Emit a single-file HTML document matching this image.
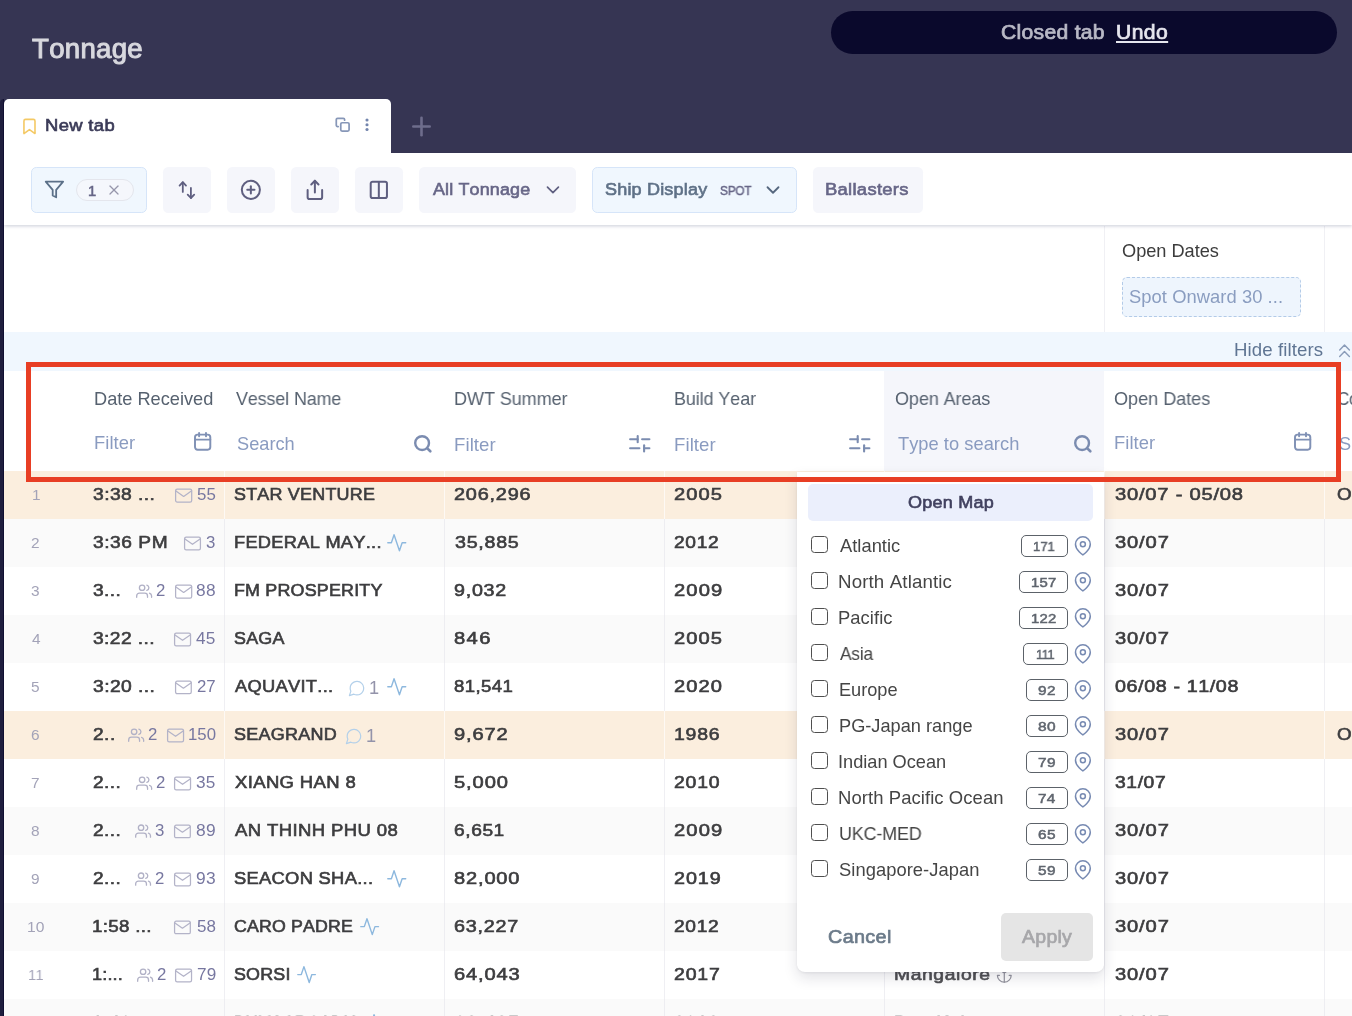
<!DOCTYPE html>
<html lang="en"><head><meta charset="utf-8"><title>Tonnage</title>
<style>
*{box-sizing:border-box;margin:0;padding:0}
html,body{width:1352px;height:1016px;overflow:hidden;background:#fff}
body{font-family:"Liberation Sans",Arial,sans-serif;font-kerning:none}
button{font:inherit;border:0;cursor:pointer}
#app{position:relative;width:1352px;height:1016px;overflow:hidden;background:#fff}
.t{position:absolute;white-space:nowrap;line-height:1;font-weight:400;display:block;transform-origin:0 0;will-change:transform}
.undo{text-decoration:underline;text-decoration-thickness:2px;text-underline-offset:2px}
.i{position:absolute;display:block;overflow:visible}
.strip{position:absolute;left:0;top:98.6px;width:4px;height:920px;background:linear-gradient(90deg,#1f1e3e 0,#1f1e3e 2.7px,#100f31 2.9px,#100f31 4px);border-radius:4px 0 0 0;z-index:4}
.topbar{position:absolute;background:#363553}
.toast{position:absolute;border-radius:22px;background:#0a092c}
.tab{position:absolute;background:#fff;border-radius:5px 5px 0 0;z-index:3}
.toolbar{position:absolute;background:#fff;box-shadow:0 1.5px 3px rgba(60,70,110,.22);z-index:2}
.btn{position:absolute;background:#f5f6fb;border-radius:5.3px}
.btn.blue{background:#f0f7fe;border:1px solid #d6e5f9}
.pill{position:absolute;border:1px solid #e4e6ed;border-radius:11px;background:#f5f7fc}
.summary{position:absolute;background:#fff}
.sumcol{position:absolute;border-left:1px solid #f0f0f4;border-right:1px solid #f0f0f4}
.chip{position:absolute;border:1px dashed #b3cbe8;border-radius:5px;background:#eef5fd}
.hidebar{position:absolute;background:#f0f7fe}
.thead{position:absolute;background:#fff}
.th{position:absolute}
.th.active{background:#f5f6fb}
.tbody{position:absolute}
.tr{position:absolute;background:#fff}
.tr.even{background:#fafafa}
.tr.peach{background:#fbeede}
.td{position:absolute;border-left:1px solid rgba(228,228,235,.6)}
.tr.peach .td{border-left-color:rgba(255,255,255,.65)}
.td.num,.td.num+.td{border-left:none}
.dropdown{position:absolute;background:#fff;border-radius:0 0 8px 8px;box-shadow:0 6px 14px rgba(30,30,60,.13),0 1px 3px rgba(30,30,60,.07);z-index:5}
.openmap{position:absolute;background:#ebeffc;border-radius:5px}
.opt{position:absolute;display:block}
.cb{position:absolute;width:17.6px;height:17.2px;border:1.3px solid #4f4f4f;border-radius:3.5px;background:#fff}
.badge{position:absolute;border:1.2px solid #5c6269;border-radius:5px;background:#fff}
.apply{position:absolute;background:#e5e5e5;border-radius:5px}
.redrect{position:absolute;left:26px;top:361.9px;width:1314.9px;height:120.2px;border:5px solid #e83e24;z-index:9;pointer-events:none}
</style></head>
<body><div id="app">
<header class="topbar" style="left:0px;top:0px;width:1352px;height:153px;">
<h1 class="t" style="left:31.79px;top:36.000px;font-size:26.78px;color:#d8d8de;-webkit-text-stroke:0.99px #d8d8de;letter-spacing:0.282px;transform:scaleX(1.0309);">Tonnage</h1>
<div class="toast" style="left:831px;top:11px;width:506px;height:43px;">
<span class="t" style="left:170.12px;top:11.000px;font-size:20.08px;color:#b9b9c6;-webkit-text-stroke:0.74px #b9b9c6;letter-spacing:0.278px;transform:scaleX(1.0516);">Closed tab</span>
<a class="t undo" style="left:284.56px;top:11.000px;font-size:20.08px;color:#e6e6ee;-webkit-text-stroke:0.74px #e6e6ee;letter-spacing:0.405px;transform:scaleX(1.0512);">Undo</a>
</div>
</header>
<div class="tab" style="left:4px;top:99px;width:387.2px;height:55px;">
<svg class="i" style="left:16.07px;top:18.17px" width="18.95" height="18.95" viewBox="0 0 24 24" fill="none" stroke="#f4c965" stroke-width="2.03" stroke-linecap="round" stroke-linejoin="round"><path d="M19 21l-7-5-7 5V5a2 2 0 0 1 2-2h10a2 2 0 0 1 2 2z"/></svg>
<span class="t" style="left:40.73px;top:18.000px;font-size:17.4px;color:#3b3b58;-webkit-text-stroke:0.64px #3b3b58;letter-spacing:0.318px;transform:scaleX(1.0604);">New tab</span>
<svg class="i" style="left:331.27px;top:18.07px" width="15.36" height="15.36" viewBox="0 0 24 24" fill="none" stroke="#8797b8" stroke-width="2.7" stroke-linecap="round" stroke-linejoin="round"><rect x="9" y="9" width="13" height="13" rx="2" ry="2"/><path d="M5 15H4a2 2 0 0 1-2-2V4a2 2 0 0 1 2-2h9a2 2 0 0 1 2 2v1"/></svg>
<svg class="i" style="left:360.90px;top:19.30px" width="4" height="14" viewBox="0 0 4 14" fill="#7385ad" stroke="none" stroke-width="0" stroke-linecap="round" stroke-linejoin="round"><circle cx="2" cy="2" r="1.55"/><circle cx="2" cy="6.75" r="1.55"/><circle cx="2" cy="11.5" r="1.55"/></svg>
</div>
<svg class="i" style="left:410.00px;top:114.60px" width="23" height="23" viewBox="0 0 23 23" fill="none" stroke="#6e6d8c" stroke-width="2.6" stroke-linecap="round" stroke-linejoin="round"><line x1="11.5" y1="2.8" x2="11.5" y2="20.2"/><line x1="3.3" y1="11.5" x2="19.7" y2="11.5"/></svg>
<div class="toolbar" style="left:4px;top:153px;width:1348px;height:72px;">
<div class="btn blue" style="left:27.2px;top:14px;width:115.7px;height:45.6px;">
<svg class="i" style="left:11.92px;top:11.42px" width="20.86" height="20.86" viewBox="0 0 24 24" fill="none" stroke="#5b7088" stroke-width="2.07" stroke-linecap="round" stroke-linejoin="round"><polygon points="22 3 2 3 10 12.46 10 19 14 21 14 12.46 22 3"/></svg>
<div class="pill" style="left:43.9px;top:11px;width:57.8px;height:22px;">
<span class="t" style="left:10.75px;top:4.000px;font-size:14.73px;color:#676687;-webkit-text-stroke:0.55px #676687;">1</span>
<svg class="i" style="left:28.85px;top:1.85px" width="16" height="16" viewBox="0 0 24 24" fill="none" stroke="#9696ab" stroke-width="1.95" stroke-linecap="round" stroke-linejoin="round"><line x1="18" y1="6" x2="6" y2="18"/><line x1="6" y1="6" x2="18" y2="18"/></svg>
</div>
</div>
<div class="btn" style="left:159.1px;top:14px;width:47.8px;height:45.6px;">
<svg class="i" style="left:13.90px;top:13.00px" width="20" height="20" viewBox="0 0 20 20" fill="none" stroke="#5f5f80" stroke-width="1.8" stroke-linecap="round" stroke-linejoin="round"><polyline points="2.6,5.6 5.8,2.2 9.0,5.6"/><line x1="5.8" y1="2.3" x2="5.8" y2="11.9"/><polyline points="10.7,14.6 13.9,18.0 17.2,14.6"/><line x1="13.9" y1="7.9" x2="13.9" y2="17.9"/></svg>
</div>
<div class="btn" style="left:223.1px;top:14px;width:47.8px;height:45.6px;">
<svg class="i" style="left:12.99px;top:11.99px" width="21.72" height="21.72" viewBox="0 0 24 24" fill="none" stroke="#5f5f80" stroke-width="2.21" stroke-linecap="round" stroke-linejoin="round"><circle cx="12" cy="12" r="10"/><line x1="12" y1="8" x2="12" y2="16"/><line x1="8" y1="12" x2="16" y2="12"/></svg>
</div>
<div class="btn" style="left:287.1px;top:14px;width:47.8px;height:45.6px;">
<svg class="i" style="left:12.91px;top:12.01px" width="21.78" height="21.78" viewBox="0 0 24 24" fill="none" stroke="#5f5f80" stroke-width="2.2" stroke-linecap="round" stroke-linejoin="round"><path d="M4 12v8a2 2 0 0 0 2 2h12a2 2 0 0 0 2-2v-8"/><polyline points="16 6 12 2 8 6"/><line x1="12" y1="2" x2="12" y2="15"/></svg>
</div>
<div class="btn" style="left:351.1px;top:14px;width:47.8px;height:45.6px;">
<svg class="i" style="left:13.12px;top:12.07px" width="21.67" height="21.67" viewBox="0 0 24 24" fill="none" stroke="#5f5f80" stroke-width="2.22" stroke-linecap="round" stroke-linejoin="round"><path d="M12 3h7a2 2 0 0 1 2 2v14a2 2 0 0 1-2 2h-7m0-18H5a2 2 0 0 0-2 2v14a2 2 0 0 0 2 2h7m0-18v18"/></svg>
</div>
<div class="btn" style="left:415px;top:14px;width:156.8px;height:45.6px;">
<span class="t" style="left:14.29px;top:14.000px;font-size:17.4px;color:#676687;-webkit-text-stroke:0.64px #676687;letter-spacing:0.146px;transform:scaleX(1.0302);">All Tonnage</span>
<svg class="i" style="left:122.80px;top:11.80px" width="21.9" height="21.9" viewBox="0 0 24 24" fill="none" stroke="#5f5f80" stroke-width="1.86" stroke-linecap="round" stroke-linejoin="round"><polyline points="6 9 12 15 18 9"/></svg>
</div>
<div class="btn blue" style="left:588.2px;top:14px;width:204.4px;height:45.6px;">
<span class="t" style="left:12.11px;top:13.000px;font-size:17.4px;color:#5f7187;-webkit-text-stroke:0.64px #5f7187;letter-spacing:0.168px;transform:scaleX(1.0369);">Ship Display</span>
<span class="t" style="left:126.39px;top:17.000px;font-size:12.05px;color:#676687;-webkit-text-stroke:0.45px #676687;letter-spacing:-0.160px;transform:scaleX(0.9733);">SPOT</span>
<svg class="i" style="left:168.80px;top:11.15px" width="22" height="22" viewBox="0 0 24 24" fill="none" stroke="#55677e" stroke-width="1.96" stroke-linecap="round" stroke-linejoin="round"><polyline points="6 9 12 15 18 9"/></svg>
</div>
<div class="btn" style="left:809.3px;top:14px;width:109.5px;height:45.6px;">
<span class="t" style="left:12.13px;top:14.000px;font-size:17.4px;color:#676687;-webkit-text-stroke:0.64px #676687;letter-spacing:0.257px;transform:scaleX(1.0608);">Ballasters</span>
</div>
</div>
<div class="summary" style="left:4px;top:226px;width:1348px;height:106px;">
<div class="sumcol" style="left:1100.3px;top:0px;width:220.5px;height:106px;">
<span class="t" style="left:16.84px;top:16.000px;font-size:18.2px;color:#3c3c3c;letter-spacing:-0.012px;transform:scaleX(0.9979);">Open Dates</span>
<div class="chip" style="left:16.7px;top:51px;width:179px;height:40px;">
<span class="t" style="left:5.57px;top:10.000px;font-size:18.2px;color:#8a9dc0;letter-spacing:0.048px;transform:scaleX(1.0102);">Spot Onward 30 ...</span>
</div>
</div>
</div>
<div class="hidebar" style="left:4px;top:332px;width:1348px;height:39px;">
<span class="t" style="left:1229.97px;top:9.000px;font-size:18.2px;color:#5f7593;letter-spacing:0.099px;transform:scaleX(1.0247);">Hide filters</span>
<svg class="i" style="left:1334.00px;top:11.00px" width="14" height="15" viewBox="0 0 14 15" fill="none" stroke="#8a9cb9" stroke-width="1.4" stroke-linecap="round" stroke-linejoin="round"><polyline points="1.7,7 6.5,1.9 11.4,7"/><polyline points="1.7,13.5 6.5,8.5 11.4,13.5"/></svg>
</div>
<div class="thead" style="left:4px;top:371px;width:1348px;height:100px;">
<div class="th" style="left:80.3px;top:0px;width:140px;height:100px;">
<span class="t lab" style="left:9.96px;top:19.000px;font-size:18.2px;color:#56616f;">Date Received</span>
<span class="t ph" style="left:9.94px;top:63.000px;font-size:18.2px;color:#8a9bc0;letter-spacing:0.042px;transform:scaleX(1.0101);">Filter</span>
<svg class="i" style="left:109.10px;top:59.50px" width="20" height="21" viewBox="0 0 20 21" fill="none" stroke="#8091b5" stroke-width="1.95" stroke-linecap="round" stroke-linejoin="round"><rect x="2" y="3.6" width="15.3" height="15.1" rx="2.6"/><line x1="6.1" y1="2" x2="6.1" y2="5.3"/><line x1="13" y1="2" x2="13" y2="5.3"/><line x1="2" y1="8.6" x2="17.3" y2="8.6"/></svg>
</div>
<div class="th" style="left:220.3px;top:0px;width:220px;height:100px;">
<span class="t lab" style="left:11.22px;top:19.000px;font-size:18.2px;color:#56616f;letter-spacing:-0.101px;transform:scaleX(0.9828);">Vessel Name</span>
<span class="t ph" style="left:12.57px;top:64.000px;font-size:18.2px;color:#8a9bc0;letter-spacing:0.010px;">Search</span>
<svg class="i" style="left:188.70px;top:63.00px" width="21" height="21" viewBox="0 0 21 21" fill="none" stroke="#7b8cb0" stroke-width="2.4" stroke-linecap="round" stroke-linejoin="round"><circle cx="9.1" cy="9.1" r="6.9"/><line x1="14.3" y1="14.4" x2="17.3" y2="17.3" stroke-width="2.7"/></svg>
</div>
<div class="th" style="left:440.3px;top:0px;width:220px;height:100px;">
<span class="t lab" style="left:9.32px;top:19.000px;font-size:18.2px;color:#56616f;letter-spacing:-0.061px;transform:scaleX(0.9910);">DWT Summer</span>
<span class="t ph" style="left:9.28px;top:65.000px;font-size:18.2px;color:#8a9bc0;letter-spacing:0.086px;transform:scaleX(1.0211);">Filter</span>
<svg class="i" style="left:183.90px;top:63.20px" width="24" height="20" viewBox="0 0 24 20" fill="none" stroke="#7b8cb0" stroke-width="2.1" stroke-linecap="round" stroke-linejoin="round"><line x1="2.1" y1="5.2" x2="9.7" y2="5.2"/><line x1="9.7" y1="2.1" x2="9.7" y2="8.3"/><line x1="14.1" y1="5.2" x2="21.4" y2="5.2"/><line x1="2.1" y1="14.2" x2="11.4" y2="14.2"/><line x1="16.1" y1="11.2" x2="16.1" y2="17.4"/><line x1="16.1" y1="14.2" x2="21.4" y2="14.2"/></svg>
</div>
<div class="th" style="left:660.3px;top:0px;width:220px;height:100px;">
<span class="t lab" style="left:9.53px;top:19.000px;font-size:18.2px;color:#56616f;letter-spacing:-0.074px;transform:scaleX(0.9852);">Build Year</span>
<span class="t ph" style="left:9.48px;top:65.000px;font-size:18.2px;color:#8a9bc0;letter-spacing:0.086px;transform:scaleX(1.0211);">Filter</span>
<svg class="i" style="left:183.90px;top:63.20px" width="24" height="20" viewBox="0 0 24 20" fill="none" stroke="#7b8cb0" stroke-width="2.1" stroke-linecap="round" stroke-linejoin="round"><line x1="2.1" y1="5.2" x2="9.7" y2="5.2"/><line x1="9.7" y1="2.1" x2="9.7" y2="8.3"/><line x1="14.1" y1="5.2" x2="21.4" y2="5.2"/><line x1="2.1" y1="14.2" x2="11.4" y2="14.2"/><line x1="16.1" y1="11.2" x2="16.1" y2="17.4"/><line x1="16.1" y1="14.2" x2="21.4" y2="14.2"/></svg>
</div>
<div class="th active" style="left:880.3px;top:0px;width:220px;height:100px;">
<span class="t lab" style="left:10.35px;top:19.000px;font-size:18.2px;color:#56616f;letter-spacing:-0.067px;transform:scaleX(0.9884);">Open Areas</span>
<span class="t ph" style="left:13.49px;top:64.000px;font-size:18.2px;color:#8a9bc0;letter-spacing:0.027px;transform:scaleX(1.0055);">Type to search</span>
<svg class="i" style="left:188.90px;top:63.00px" width="21" height="21" viewBox="0 0 21 21" fill="none" stroke="#7b8cb0" stroke-width="2.4" stroke-linecap="round" stroke-linejoin="round"><circle cx="9.1" cy="9.1" r="6.9"/><line x1="14.3" y1="14.4" x2="17.3" y2="17.3" stroke-width="2.7"/></svg>
</div>
<div class="th" style="left:1100.3px;top:0px;width:220px;height:100px;">
<span class="t lab" style="left:10.04px;top:19.000px;font-size:18.2px;color:#56616f;letter-spacing:-0.031px;transform:scaleX(0.9945);">Open Dates</span>
<span class="t ph" style="left:9.39px;top:63.000px;font-size:18.2px;color:#8a9bc0;letter-spacing:0.045px;transform:scaleX(1.0110);">Filter</span>
<svg class="i" style="left:188.90px;top:59.50px" width="20" height="21" viewBox="0 0 20 21" fill="none" stroke="#8091b5" stroke-width="1.95" stroke-linecap="round" stroke-linejoin="round"><rect x="2" y="3.6" width="15.3" height="15.1" rx="2.6"/><line x1="6.1" y1="2" x2="6.1" y2="5.3"/><line x1="13" y1="2" x2="13" y2="5.3"/><line x1="2" y1="8.6" x2="17.3" y2="8.6"/></svg>
</div>
<div class="th" style="left:1320.3px;top:0px;width:220px;height:100px;">
<span class="t lab" style="left:12.83px;top:19.000px;font-size:18.2px;color:#56616f;letter-spacing:-0.490px;transform:scaleX(0.9400);">Comments</span>
<span class="t ph" style="left:14.27px;top:64.000px;font-size:18.2px;color:#8a9bc0;">Search</span>
</div>
</div>
<div class="tbody" style="left:4px;top:471px;width:1348px;height:545px;">
<div class="tr peach" style="left:0px;top:0px;width:1348px;height:48px;">
<div class="td num" style="left:0px;top:0px;width:80.3px;height:48px;">
<span class="t" style="left:27.73px;top:16.000px;font-size:15.4px;color:#a3a3b8;">1</span>
</div>
<div class="td" style="left:80.3px;top:0px;width:140px;height:48px;">
<span class="t" style="left:8.52px;top:15.000px;font-size:17.4px;color:#3d3d3f;-webkit-text-stroke:0.64px #3d3d3f;letter-spacing:0.382px;transform:scaleX(1.1066);">3:38 ...</span>
<svg class="i" style="left:89.54px;top:14.94px" width="19.31" height="19.31" viewBox="0 0 24 24" fill="none" stroke="#b3b3c8" stroke-width="1.55" stroke-linecap="round" stroke-linejoin="round"><path d="M4 4h16c1.1 0 2 .9 2 2v12c0 1.1-.9 2-2 2H4c-1.1 0-2-.9-2-2V6c0-1.1.9-2 2-2z"/><polyline points="22,6 12,13 2,6"/></svg>
<span class="t" style="left:112.67px;top:16.000px;font-size:16.8px;color:#7777a0;letter-spacing:0.049px;transform:scaleX(1.0053);">55</span>
</div>
<div class="td" style="left:220.3px;top:0px;width:220px;height:48px;">
<span class="t" style="left:9.11px;top:15.000px;font-size:17.4px;color:#3d3d3f;-webkit-text-stroke:0.64px #3d3d3f;letter-spacing:0.201px;transform:scaleX(1.0317);">STAR VENTURE</span>
</div>
<div class="td" style="left:440.3px;top:0px;width:220px;height:48px;">
<span class="t" style="left:8.97px;top:15.000px;font-size:17.4px;color:#3d3d3f;-webkit-text-stroke:0.64px #3d3d3f;letter-spacing:0.690px;transform:scaleX(1.1418);">206,296</span>
</div>
<div class="td" style="left:660.3px;top:0px;width:220px;height:48px;">
<span class="t" style="left:9.06px;top:15.000px;font-size:17.4px;color:#3d3d3f;-webkit-text-stroke:0.64px #3d3d3f;letter-spacing:0.914px;transform:scaleX(1.1560);">2005</span>
</div>
<div class="td" style="left:880.3px;top:0px;width:220px;height:48px;">
<span class="t" style="left:8.50px;top:15.000px;font-size:17.4px;color:#4f4f52;-webkit-text-stroke:0.64px #4f4f52;letter-spacing:0.500px;transform:scaleX(1.0800);">Paradip</span>
</div>
<div class="td" style="left:1100.3px;top:0px;width:220px;height:48px;">
<span class="t" style="left:9.30px;top:15.000px;font-size:17.4px;color:#3d3d3f;-webkit-text-stroke:0.64px #3d3d3f;letter-spacing:0.657px;transform:scaleX(1.1600);">30/07 - 05/08</span>
</div>
<div class="td" style="left:1320.3px;top:0px;width:220px;height:48px;">
<span class="t" style="left:12.06px;top:15.000px;font-size:17.4px;color:#3d3d3f;-webkit-text-stroke:0.64px #3d3d3f;letter-spacing:0.500px;transform:scaleX(1.0800);">Open</span>
</div>
</div>
<div class="tr even" style="left:0px;top:48px;width:1348px;height:48px;">
<div class="td num" style="left:0px;top:0px;width:80.3px;height:48px;">
<span class="t" style="left:27.23px;top:16.000px;font-size:15.4px;color:#a3a3b8;">2</span>
</div>
<div class="td" style="left:80.3px;top:0px;width:140px;height:48px;">
<span class="t" style="left:8.52px;top:15.000px;font-size:17.4px;color:#3d3d3f;-webkit-text-stroke:0.64px #3d3d3f;letter-spacing:0.515px;transform:scaleX(1.0995);">3:36 PM</span>
<svg class="i" style="left:98.69px;top:15.09px" width="19.01" height="19.01" viewBox="0 0 24 24" fill="none" stroke="#b3b3c8" stroke-width="1.58" stroke-linecap="round" stroke-linejoin="round"><path d="M4 4h16c1.1 0 2 .9 2 2v12c0 1.1-.9 2-2 2H4c-1.1 0-2-.9-2-2V6c0-1.1.9-2 2-2z"/><polyline points="22,6 12,13 2,6"/></svg>
<span class="t" style="left:121.81px;top:16.000px;font-size:16.8px;color:#7777a0;">3</span>
</div>
<div class="td" style="left:220.3px;top:0px;width:220px;height:48px;">
<span class="t" style="left:8.44px;top:15.000px;font-size:17.4px;color:#3d3d3f;-webkit-text-stroke:0.64px #3d3d3f;letter-spacing:0.261px;transform:scaleX(1.0490);">FEDERAL MAY...</span>
<svg class="i" style="left:161.04px;top:12.99px" width="21.52" height="21.52" viewBox="0 0 24 24" fill="none" stroke="#8db8de" stroke-width="1.56" stroke-linecap="round" stroke-linejoin="round"><polyline points="22 12 18 12 15 21 9 3 6 12 2 12"/></svg>
</div>
<div class="td" style="left:440.3px;top:0px;width:220px;height:48px;">
<span class="t" style="left:9.21px;top:15.000px;font-size:17.4px;color:#3d3d3f;-webkit-text-stroke:0.64px #3d3d3f;letter-spacing:0.647px;transform:scaleX(1.1293);">35,885</span>
</div>
<div class="td" style="left:660.3px;top:0px;width:220px;height:48px;">
<span class="t" style="left:9.09px;top:15.000px;font-size:17.4px;color:#3d3d3f;-webkit-text-stroke:0.64px #3d3d3f;letter-spacing:0.625px;transform:scaleX(1.1020);">2012</span>
</div>
<div class="td" style="left:880.3px;top:0px;width:220px;height:48px;">
<span class="t" style="left:8.50px;top:15.000px;font-size:17.4px;color:#4f4f52;-webkit-text-stroke:0.64px #4f4f52;letter-spacing:0.500px;transform:scaleX(1.0800);">Houston</span>
</div>
<div class="td" style="left:1100.3px;top:0px;width:220px;height:48px;">
<span class="t" style="left:9.30px;top:15.000px;font-size:17.4px;color:#3d3d3f;-webkit-text-stroke:0.64px #3d3d3f;letter-spacing:0.769px;transform:scaleX(1.1548);">30/07</span>
</div>
<div class="td" style="left:1320.3px;top:0px;width:220px;height:48px;">
</div>
</div>
<div class="tr" style="left:0px;top:96px;width:1348px;height:48px;">
<div class="td num" style="left:0px;top:0px;width:80.3px;height:48px;">
<span class="t" style="left:27.41px;top:16.000px;font-size:15.4px;color:#a3a3b8;">3</span>
</div>
<div class="td" style="left:80.3px;top:0px;width:140px;height:48px;">
<span class="t" style="left:8.52px;top:15.000px;font-size:17.4px;color:#3d3d3f;-webkit-text-stroke:0.64px #3d3d3f;letter-spacing:0.369px;transform:scaleX(1.1003);">3...</span>
<svg class="i" style="left:51.56px;top:16.31px" width="16.28" height="16.28" viewBox="0 0 24 24" fill="none" stroke="#b1b1c6" stroke-width="1.92" stroke-linecap="round" stroke-linejoin="round"><path d="M17 21v-2a4 4 0 0 0-4-4H5a4 4 0 0 0-4 4v2"/><circle cx="9" cy="7" r="4"/><path d="M23 21v-2a4 4 0 0 0-3-3.87"/><path d="M16 3.13a4 4 0 0 1 0 7.75"/></svg>
<span class="t" style="left:71.86px;top:16.000px;font-size:16.8px;color:#7777a0;">2</span>
<svg class="i" style="left:89.54px;top:14.94px" width="19.31" height="19.31" viewBox="0 0 24 24" fill="none" stroke="#b3b3c8" stroke-width="1.55" stroke-linecap="round" stroke-linejoin="round"><path d="M4 4h16c1.1 0 2 .9 2 2v12c0 1.1-.9 2-2 2H4c-1.1 0-2-.9-2-2V6c0-1.1.9-2 2-2z"/><polyline points="22,6 12,13 2,6"/></svg>
<span class="t" style="left:111.95px;top:16.000px;font-size:16.8px;color:#7777a0;letter-spacing:0.263px;transform:scaleX(1.0292);">88</span>
</div>
<div class="td" style="left:220.3px;top:0px;width:220px;height:48px;">
<span class="t" style="left:8.46px;top:15.000px;font-size:17.4px;color:#3d3d3f;-webkit-text-stroke:0.64px #3d3d3f;letter-spacing:0.180px;transform:scaleX(1.0293);">FM PROSPERITY</span>
</div>
<div class="td" style="left:440.3px;top:0px;width:220px;height:48px;">
<span class="t" style="left:9.04px;top:15.000px;font-size:17.4px;color:#3d3d3f;-webkit-text-stroke:0.64px #3d3d3f;letter-spacing:0.666px;transform:scaleX(1.1317);">9,032</span>
</div>
<div class="td" style="left:660.3px;top:0px;width:220px;height:48px;">
<span class="t" style="left:9.06px;top:15.000px;font-size:17.4px;color:#3d3d3f;-webkit-text-stroke:0.64px #3d3d3f;letter-spacing:0.956px;transform:scaleX(1.1600);">2009</span>
</div>
<div class="td" style="left:880.3px;top:0px;width:220px;height:48px;">
<span class="t" style="left:9.09px;top:15.000px;font-size:17.4px;color:#4f4f52;-webkit-text-stroke:0.64px #4f4f52;letter-spacing:0.500px;transform:scaleX(1.0800);">Chittagong</span>
</div>
<div class="td" style="left:1100.3px;top:0px;width:220px;height:48px;">
<span class="t" style="left:9.30px;top:15.000px;font-size:17.4px;color:#3d3d3f;-webkit-text-stroke:0.64px #3d3d3f;letter-spacing:0.769px;transform:scaleX(1.1548);">30/07</span>
</div>
<div class="td" style="left:1320.3px;top:0px;width:220px;height:48px;">
</div>
</div>
<div class="tr even" style="left:0px;top:144px;width:1348px;height:48px;">
<div class="td num" style="left:0px;top:0px;width:80.3px;height:48px;">
<span class="t" style="left:27.65px;top:16.000px;font-size:15.4px;color:#a3a3b8;">4</span>
</div>
<div class="td" style="left:80.3px;top:0px;width:140px;height:48px;">
<span class="t" style="left:8.52px;top:15.000px;font-size:17.4px;color:#3d3d3f;-webkit-text-stroke:0.64px #3d3d3f;letter-spacing:0.372px;transform:scaleX(1.1034);">3:22 ...</span>
<svg class="i" style="left:88.58px;top:15.03px" width="19.13" height="19.13" viewBox="0 0 24 24" fill="none" stroke="#b3b3c8" stroke-width="1.57" stroke-linecap="round" stroke-linejoin="round"><path d="M4 4h16c1.1 0 2 .9 2 2v12c0 1.1-.9 2-2 2H4c-1.1 0-2-.9-2-2V6c0-1.1.9-2 2-2z"/><polyline points="22,6 12,13 2,6"/></svg>
<span class="t" style="left:112.20px;top:16.000px;font-size:16.8px;color:#7777a0;letter-spacing:0.240px;transform:scaleX(1.0260);">45</span>
</div>
<div class="td" style="left:220.3px;top:0px;width:220px;height:48px;">
<span class="t" style="left:9.12px;top:15.000px;font-size:17.4px;color:#3d3d3f;-webkit-text-stroke:0.64px #3d3d3f;letter-spacing:0.242px;transform:scaleX(1.0288);">SAGA</span>
</div>
<div class="td" style="left:440.3px;top:0px;width:220px;height:48px;">
<span class="t" style="left:9.09px;top:15.000px;font-size:17.4px;color:#3d3d3f;-webkit-text-stroke:0.64px #3d3d3f;letter-spacing:1.183px;transform:scaleX(1.1600);">846</span>
</div>
<div class="td" style="left:660.3px;top:0px;width:220px;height:48px;">
<span class="t" style="left:9.06px;top:15.000px;font-size:17.4px;color:#3d3d3f;-webkit-text-stroke:0.64px #3d3d3f;letter-spacing:0.914px;transform:scaleX(1.1560);">2005</span>
</div>
<div class="td" style="left:880.3px;top:0px;width:220px;height:48px;">
<span class="t" style="left:8.50px;top:15.000px;font-size:17.4px;color:#4f4f52;-webkit-text-stroke:0.64px #4f4f52;letter-spacing:0.500px;transform:scaleX(1.0800);">Rotterdam</span>
</div>
<div class="td" style="left:1100.3px;top:0px;width:220px;height:48px;">
<span class="t" style="left:9.30px;top:15.000px;font-size:17.4px;color:#3d3d3f;-webkit-text-stroke:0.64px #3d3d3f;letter-spacing:0.769px;transform:scaleX(1.1548);">30/07</span>
</div>
<div class="td" style="left:1320.3px;top:0px;width:220px;height:48px;">
</div>
</div>
<div class="tr" style="left:0px;top:192px;width:1348px;height:48px;">
<div class="td num" style="left:0px;top:0px;width:80.3px;height:48px;">
<span class="t" style="left:27.38px;top:16.000px;font-size:15.4px;color:#a3a3b8;">5</span>
</div>
<div class="td" style="left:80.3px;top:0px;width:140px;height:48px;">
<span class="t" style="left:8.52px;top:15.000px;font-size:17.4px;color:#3d3d3f;-webkit-text-stroke:0.64px #3d3d3f;letter-spacing:0.384px;transform:scaleX(1.1072);">3:20 ...</span>
<svg class="i" style="left:90.18px;top:15.18px" width="18.83" height="18.83" viewBox="0 0 24 24" fill="none" stroke="#b3b3c8" stroke-width="1.59" stroke-linecap="round" stroke-linejoin="round"><path d="M4 4h16c1.1 0 2 .9 2 2v12c0 1.1-.9 2-2 2H4c-1.1 0-2-.9-2-2V6c0-1.1.9-2 2-2z"/><polyline points="22,6 12,13 2,6"/></svg>
<span class="t" style="left:113.06px;top:16.000px;font-size:16.8px;color:#7777a0;letter-spacing:-0.069px;transform:scaleX(0.9925);">27</span>
</div>
<div class="td" style="left:220.3px;top:0px;width:220px;height:48px;">
<span class="t" style="left:9.90px;top:15.000px;font-size:17.4px;color:#3d3d3f;-webkit-text-stroke:0.64px #3d3d3f;letter-spacing:0.266px;transform:scaleX(1.0521);">AQUAVIT...</span>
<svg class="i" style="left:121.67px;top:15.67px" width="19.07" height="19.07" viewBox="0 0 24 24" fill="none" stroke="#b3d0ea" stroke-width="1.51" stroke-linecap="round" stroke-linejoin="round"><path d="M21 11.5a8.38 8.38 0 0 1-.9 3.8 8.5 8.5 0 0 1-7.6 4.7 8.38 8.38 0 0 1-3.8-.9L3 21l1.9-5.7a8.38 8.38 0 0 1-.9-3.8 8.5 8.5 0 0 1 4.7-7.6 8.38 8.38 0 0 1 3.8-.9h.5a8.48 8.48 0 0 1 8 8v.5z"/></svg>
<span class="t" style="left:143.61px;top:16.000px;font-size:18.2px;color:#9393aa;">1</span>
<svg class="i" style="left:161.04px;top:12.99px" width="21.52" height="21.52" viewBox="0 0 24 24" fill="none" stroke="#8db8de" stroke-width="1.56" stroke-linecap="round" stroke-linejoin="round"><polyline points="22 12 18 12 15 21 9 3 6 12 2 12"/></svg>
</div>
<div class="td" style="left:440.3px;top:0px;width:220px;height:48px;">
<span class="t" style="left:9.13px;top:15.000px;font-size:17.4px;color:#3d3d3f;-webkit-text-stroke:0.64px #3d3d3f;letter-spacing:0.363px;transform:scaleX(1.0690);">81,541</span>
</div>
<div class="td" style="left:660.3px;top:0px;width:220px;height:48px;">
<span class="t" style="left:9.06px;top:15.000px;font-size:17.4px;color:#3d3d3f;-webkit-text-stroke:0.64px #3d3d3f;letter-spacing:0.910px;transform:scaleX(1.1549);">2020</span>
</div>
<div class="td" style="left:880.3px;top:0px;width:220px;height:48px;">
<span class="t" style="left:9.19px;top:15.000px;font-size:17.4px;color:#4f4f52;-webkit-text-stroke:0.64px #4f4f52;letter-spacing:0.500px;transform:scaleX(1.0800);">Singapore</span>
</div>
<div class="td" style="left:1100.3px;top:0px;width:220px;height:48px;">
<span class="t" style="left:9.29px;top:15.000px;font-size:17.4px;color:#3d3d3f;-webkit-text-stroke:0.64px #3d3d3f;letter-spacing:0.534px;transform:scaleX(1.1325);">06/08 - 11/08</span>
</div>
<div class="td" style="left:1320.3px;top:0px;width:220px;height:48px;">
</div>
</div>
<div class="tr peach" style="left:0px;top:240px;width:1348px;height:48px;">
<div class="td num" style="left:0px;top:0px;width:80.3px;height:48px;">
<span class="t" style="left:27.22px;top:16.000px;font-size:15.4px;color:#a3a3b8;">6</span>
</div>
<div class="td" style="left:80.3px;top:0px;width:140px;height:48px;">
<span class="t" style="left:8.29px;top:15.000px;font-size:17.4px;color:#3d3d3f;-webkit-text-stroke:0.64px #3d3d3f;letter-spacing:0.426px;transform:scaleX(1.0994);">2..</span>
<svg class="i" style="left:43.53px;top:16.28px" width="16.33" height="16.33" viewBox="0 0 24 24" fill="none" stroke="#b1b1c6" stroke-width="1.91" stroke-linecap="round" stroke-linejoin="round"><path d="M17 21v-2a4 4 0 0 0-4-4H5a4 4 0 0 0-4 4v2"/><circle cx="9" cy="7" r="4"/><path d="M23 21v-2a4 4 0 0 0-3-3.87"/><path d="M16 3.13a4 4 0 0 1 0 7.75"/></svg>
<span class="t" style="left:64.06px;top:16.000px;font-size:16.8px;color:#7777a0;">2</span>
<svg class="i" style="left:81.48px;top:15.03px" width="19.13" height="19.13" viewBox="0 0 24 24" fill="none" stroke="#b3b3c8" stroke-width="1.57" stroke-linecap="round" stroke-linejoin="round"><path d="M4 4h16c1.1 0 2 .9 2 2v12c0 1.1-.9 2-2 2H4c-1.1 0-2-.9-2-2V6c0-1.1.9-2 2-2z"/><polyline points="22,6 12,13 2,6"/></svg>
<span class="t" style="left:103.32px;top:16.000px;font-size:16.8px;color:#7777a0;">150</span>
</div>
<div class="td" style="left:220.3px;top:0px;width:220px;height:48px;">
<span class="t" style="left:9.11px;top:15.000px;font-size:17.4px;color:#3d3d3f;-webkit-text-stroke:0.64px #3d3d3f;letter-spacing:0.243px;transform:scaleX(1.0338);">SEAGRAND</span>
<svg class="i" style="left:118.87px;top:15.67px" width="19.07" height="19.07" viewBox="0 0 24 24" fill="none" stroke="#b3d0ea" stroke-width="1.51" stroke-linecap="round" stroke-linejoin="round"><path d="M21 11.5a8.38 8.38 0 0 1-.9 3.8 8.5 8.5 0 0 1-7.6 4.7 8.38 8.38 0 0 1-3.8-.9L3 21l1.9-5.7a8.38 8.38 0 0 1-.9-3.8 8.5 8.5 0 0 1 4.7-7.6 8.38 8.38 0 0 1 3.8-.9h.5a8.48 8.48 0 0 1 8 8v.5z"/></svg>
<span class="t" style="left:140.81px;top:16.000px;font-size:18.2px;color:#9393aa;">1</span>
</div>
<div class="td" style="left:440.3px;top:0px;width:220px;height:48px;">
<span class="t" style="left:9.03px;top:15.000px;font-size:17.4px;color:#3d3d3f;-webkit-text-stroke:0.64px #3d3d3f;letter-spacing:0.766px;transform:scaleX(1.1546);">9,672</span>
</div>
<div class="td" style="left:660.3px;top:0px;width:220px;height:48px;">
<span class="t" style="left:8.58px;top:15.000px;font-size:17.4px;color:#3d3d3f;-webkit-text-stroke:0.64px #3d3d3f;letter-spacing:0.704px;transform:scaleX(1.1176);">1986</span>
</div>
<div class="td" style="left:880.3px;top:0px;width:220px;height:48px;">
<span class="t" style="left:10.01px;top:15.000px;font-size:17.4px;color:#4f4f52;-webkit-text-stroke:0.64px #4f4f52;letter-spacing:0.500px;transform:scaleX(1.0800);">Alexandria</span>
</div>
<div class="td" style="left:1100.3px;top:0px;width:220px;height:48px;">
<span class="t" style="left:9.30px;top:15.000px;font-size:17.4px;color:#3d3d3f;-webkit-text-stroke:0.64px #3d3d3f;letter-spacing:0.769px;transform:scaleX(1.1548);">30/07</span>
</div>
<div class="td" style="left:1320.3px;top:0px;width:220px;height:48px;">
<span class="t" style="left:12.06px;top:15.000px;font-size:17.4px;color:#3d3d3f;-webkit-text-stroke:0.64px #3d3d3f;letter-spacing:0.500px;transform:scaleX(1.0800);">Open</span>
</div>
</div>
<div class="tr" style="left:0px;top:288px;width:1348px;height:48px;">
<div class="td num" style="left:0px;top:0px;width:80.3px;height:48px;">
<span class="t" style="left:27.21px;top:16.000px;font-size:15.4px;color:#a3a3b8;">7</span>
</div>
<div class="td" style="left:80.3px;top:0px;width:140px;height:48px;">
<span class="t" style="left:8.29px;top:15.000px;font-size:17.4px;color:#3d3d3f;-webkit-text-stroke:0.64px #3d3d3f;letter-spacing:0.356px;transform:scaleX(1.0972);">2...</span>
<svg class="i" style="left:51.43px;top:16.28px" width="16.33" height="16.33" viewBox="0 0 24 24" fill="none" stroke="#b1b1c6" stroke-width="1.91" stroke-linecap="round" stroke-linejoin="round"><path d="M17 21v-2a4 4 0 0 0-4-4H5a4 4 0 0 0-4 4v2"/><circle cx="9" cy="7" r="4"/><path d="M23 21v-2a4 4 0 0 0-3-3.87"/><path d="M16 3.13a4 4 0 0 1 0 7.75"/></svg>
<span class="t" style="left:71.76px;top:16.000px;font-size:16.8px;color:#7777a0;">2</span>
<svg class="i" style="left:88.58px;top:15.03px" width="19.13" height="19.13" viewBox="0 0 24 24" fill="none" stroke="#b3b3c8" stroke-width="1.57" stroke-linecap="round" stroke-linejoin="round"><path d="M4 4h16c1.1 0 2 .9 2 2v12c0 1.1-.9 2-2 2H4c-1.1 0-2-.9-2-2V6c0-1.1.9-2 2-2z"/><polyline points="22,6 12,13 2,6"/></svg>
<span class="t" style="left:112.04px;top:16.000px;font-size:16.8px;color:#7777a0;letter-spacing:0.225px;transform:scaleX(1.0247);">35</span>
</div>
<div class="td" style="left:220.3px;top:0px;width:220px;height:48px;">
<span class="t" style="left:9.52px;top:15.000px;font-size:17.4px;color:#3d3d3f;-webkit-text-stroke:0.64px #3d3d3f;letter-spacing:0.348px;transform:scaleX(1.0627);">XIANG HAN 8</span>
</div>
<div class="td" style="left:440.3px;top:0px;width:220px;height:48px;">
<span class="t" style="left:9.16px;top:15.000px;font-size:17.4px;color:#3d3d3f;-webkit-text-stroke:0.64px #3d3d3f;letter-spacing:0.779px;transform:scaleX(1.1563);">5,000</span>
</div>
<div class="td" style="left:660.3px;top:0px;width:220px;height:48px;">
<span class="t" style="left:9.08px;top:15.000px;font-size:17.4px;color:#3d3d3f;-webkit-text-stroke:0.64px #3d3d3f;letter-spacing:0.702px;transform:scaleX(1.1153);">2010</span>
</div>
<div class="td" style="left:880.3px;top:0px;width:220px;height:48px;">
<span class="t" style="left:9.16px;top:15.000px;font-size:17.4px;color:#4f4f52;-webkit-text-stroke:0.64px #4f4f52;letter-spacing:0.500px;transform:scaleX(1.0800);">Qingdao</span>
</div>
<div class="td" style="left:1100.3px;top:0px;width:220px;height:48px;">
<span class="t" style="left:9.32px;top:15.000px;font-size:17.4px;color:#3d3d3f;-webkit-text-stroke:0.64px #3d3d3f;letter-spacing:0.557px;transform:scaleX(1.1075);">31/07</span>
</div>
<div class="td" style="left:1320.3px;top:0px;width:220px;height:48px;">
</div>
</div>
<div class="tr even" style="left:0px;top:336px;width:1348px;height:48px;">
<div class="td num" style="left:0px;top:0px;width:80.3px;height:48px;">
<span class="t" style="left:27.33px;top:16.000px;font-size:15.4px;color:#a3a3b8;">8</span>
</div>
<div class="td" style="left:80.3px;top:0px;width:140px;height:48px;">
<span class="t" style="left:8.29px;top:15.000px;font-size:17.4px;color:#3d3d3f;-webkit-text-stroke:0.64px #3d3d3f;letter-spacing:0.356px;transform:scaleX(1.0972);">2...</span>
<svg class="i" style="left:50.57px;top:16.37px" width="16.17" height="16.17" viewBox="0 0 24 24" fill="none" stroke="#b1b1c6" stroke-width="1.93" stroke-linecap="round" stroke-linejoin="round"><path d="M17 21v-2a4 4 0 0 0-4-4H5a4 4 0 0 0-4 4v2"/><circle cx="9" cy="7" r="4"/><path d="M23 21v-2a4 4 0 0 0-3-3.87"/><path d="M16 3.13a4 4 0 0 1 0 7.75"/></svg>
<span class="t" style="left:71.06px;top:16.000px;font-size:16.8px;color:#7777a0;">3</span>
<svg class="i" style="left:89.10px;top:15.15px" width="18.89" height="18.89" viewBox="0 0 24 24" fill="none" stroke="#b3b3c8" stroke-width="1.59" stroke-linecap="round" stroke-linejoin="round"><path d="M4 4h16c1.1 0 2 .9 2 2v12c0 1.1-.9 2-2 2H4c-1.1 0-2-.9-2-2V6c0-1.1.9-2 2-2z"/><polyline points="22,6 12,13 2,6"/></svg>
<span class="t" style="left:111.84px;top:16.000px;font-size:16.8px;color:#7777a0;letter-spacing:0.317px;transform:scaleX(1.0356);">89</span>
</div>
<div class="td" style="left:220.3px;top:0px;width:220px;height:48px;">
<span class="t" style="left:9.90px;top:15.000px;font-size:17.4px;color:#3d3d3f;-webkit-text-stroke:0.64px #3d3d3f;letter-spacing:0.350px;transform:scaleX(1.0656);">AN THINH PHU 08</span>
</div>
<div class="td" style="left:440.3px;top:0px;width:220px;height:48px;">
<span class="t" style="left:8.98px;top:15.000px;font-size:17.4px;color:#3d3d3f;-webkit-text-stroke:0.64px #3d3d3f;letter-spacing:0.528px;transform:scaleX(1.1018);">6,651</span>
</div>
<div class="td" style="left:660.3px;top:0px;width:220px;height:48px;">
<span class="t" style="left:9.06px;top:15.000px;font-size:17.4px;color:#3d3d3f;-webkit-text-stroke:0.64px #3d3d3f;letter-spacing:0.956px;transform:scaleX(1.1600);">2009</span>
</div>
<div class="td" style="left:880.3px;top:0px;width:220px;height:48px;">
<span class="t" style="left:8.50px;top:15.000px;font-size:17.4px;color:#4f4f52;-webkit-text-stroke:0.64px #4f4f52;letter-spacing:0.500px;transform:scaleX(1.0800);">Haiphong</span>
</div>
<div class="td" style="left:1100.3px;top:0px;width:220px;height:48px;">
<span class="t" style="left:9.30px;top:15.000px;font-size:17.4px;color:#3d3d3f;-webkit-text-stroke:0.64px #3d3d3f;letter-spacing:0.769px;transform:scaleX(1.1548);">30/07</span>
</div>
<div class="td" style="left:1320.3px;top:0px;width:220px;height:48px;">
</div>
</div>
<div class="tr" style="left:0px;top:384px;width:1348px;height:48px;">
<div class="td num" style="left:0px;top:0px;width:80.3px;height:48px;">
<span class="t" style="left:27.28px;top:16.000px;font-size:15.4px;color:#a3a3b8;">9</span>
</div>
<div class="td" style="left:80.3px;top:0px;width:140px;height:48px;">
<span class="t" style="left:8.29px;top:15.000px;font-size:17.4px;color:#3d3d3f;-webkit-text-stroke:0.64px #3d3d3f;letter-spacing:0.356px;transform:scaleX(1.0972);">2...</span>
<svg class="i" style="left:50.57px;top:16.37px" width="16.17" height="16.17" viewBox="0 0 24 24" fill="none" stroke="#b1b1c6" stroke-width="1.93" stroke-linecap="round" stroke-linejoin="round"><path d="M17 21v-2a4 4 0 0 0-4-4H5a4 4 0 0 0-4 4v2"/><circle cx="9" cy="7" r="4"/><path d="M23 21v-2a4 4 0 0 0-3-3.87"/><path d="M16 3.13a4 4 0 0 1 0 7.75"/></svg>
<span class="t" style="left:71.16px;top:16.000px;font-size:16.8px;color:#7777a0;">2</span>
<svg class="i" style="left:88.86px;top:15.06px" width="19.07" height="19.07" viewBox="0 0 24 24" fill="none" stroke="#b3b3c8" stroke-width="1.57" stroke-linecap="round" stroke-linejoin="round"><path d="M4 4h16c1.1 0 2 .9 2 2v12c0 1.1-.9 2-2 2H4c-1.1 0-2-.9-2-2V6c0-1.1.9-2 2-2z"/><polyline points="22,6 12,13 2,6"/></svg>
<span class="t" style="left:111.78px;top:16.000px;font-size:16.8px;color:#7777a0;letter-spacing:0.317px;transform:scaleX(1.0356);">93</span>
</div>
<div class="td" style="left:220.3px;top:0px;width:220px;height:48px;">
<span class="t" style="left:9.10px;top:15.000px;font-size:17.4px;color:#3d3d3f;-webkit-text-stroke:0.64px #3d3d3f;letter-spacing:0.289px;transform:scaleX(1.0535);">SEACON SHA...</span>
<svg class="i" style="left:161.04px;top:12.99px" width="21.52" height="21.52" viewBox="0 0 24 24" fill="none" stroke="#8db8de" stroke-width="1.56" stroke-linecap="round" stroke-linejoin="round"><polyline points="22 12 18 12 15 21 9 3 6 12 2 12"/></svg>
</div>
<div class="td" style="left:440.3px;top:0px;width:220px;height:48px;">
<span class="t" style="left:9.10px;top:15.000px;font-size:17.4px;color:#3d3d3f;-webkit-text-stroke:0.64px #3d3d3f;letter-spacing:0.741px;transform:scaleX(1.1510);">82,000</span>
</div>
<div class="td" style="left:660.3px;top:0px;width:220px;height:48px;">
<span class="t" style="left:9.07px;top:15.000px;font-size:17.4px;color:#3d3d3f;-webkit-text-stroke:0.64px #3d3d3f;letter-spacing:0.807px;transform:scaleX(1.1355);">2019</span>
</div>
<div class="td" style="left:880.3px;top:0px;width:220px;height:48px;">
<span class="t" style="left:9.45px;top:15.000px;font-size:17.4px;color:#4f4f52;-webkit-text-stroke:0.64px #4f4f52;letter-spacing:0.500px;transform:scaleX(1.0800);">Zhoushan</span>
</div>
<div class="td" style="left:1100.3px;top:0px;width:220px;height:48px;">
<span class="t" style="left:9.30px;top:15.000px;font-size:17.4px;color:#3d3d3f;-webkit-text-stroke:0.64px #3d3d3f;letter-spacing:0.769px;transform:scaleX(1.1548);">30/07</span>
</div>
<div class="td" style="left:1320.3px;top:0px;width:220px;height:48px;">
</div>
</div>
<div class="tr even" style="left:0px;top:432px;width:1348px;height:48px;">
<div class="td num" style="left:0px;top:0px;width:80.3px;height:48px;">
<span class="t" style="left:23.11px;top:16.000px;font-size:15.4px;color:#a3a3b8;letter-spacing:0.119px;transform:scaleX(1.0146);">10</span>
</div>
<div class="td" style="left:80.3px;top:0px;width:140px;height:48px;">
<span class="t" style="left:7.82px;top:15.000px;font-size:17.4px;color:#3d3d3f;-webkit-text-stroke:0.64px #3d3d3f;letter-spacing:0.286px;transform:scaleX(1.0788);">1:58 ...</span>
<svg class="i" style="left:89.10px;top:15.15px" width="18.89" height="18.89" viewBox="0 0 24 24" fill="none" stroke="#b3b3c8" stroke-width="1.59" stroke-linecap="round" stroke-linejoin="round"><path d="M4 4h16c1.1 0 2 .9 2 2v12c0 1.1-.9 2-2 2H4c-1.1 0-2-.9-2-2V6c0-1.1.9-2 2-2z"/><polyline points="22,6 12,13 2,6"/></svg>
<span class="t" style="left:112.42px;top:16.000px;font-size:16.8px;color:#7777a0;letter-spacing:0.109px;transform:scaleX(1.0119);">58</span>
</div>
<div class="td" style="left:220.3px;top:0px;width:220px;height:48px;">
<span class="t" style="left:9.02px;top:15.000px;font-size:17.4px;color:#3d3d3f;-webkit-text-stroke:0.64px #3d3d3f;letter-spacing:0.146px;transform:scaleX(1.0219);">CARO PADRE</span>
<svg class="i" style="left:133.66px;top:13.11px" width="21.28" height="21.28" viewBox="0 0 24 24" fill="none" stroke="#8db8de" stroke-width="1.58" stroke-linecap="round" stroke-linejoin="round"><polyline points="22 12 18 12 15 21 9 3 6 12 2 12"/></svg>
</div>
<div class="td" style="left:440.3px;top:0px;width:220px;height:48px;">
<span class="t" style="left:8.96px;top:15.000px;font-size:17.4px;color:#3d3d3f;-webkit-text-stroke:0.64px #3d3d3f;letter-spacing:0.677px;transform:scaleX(1.1372);">63,227</span>
</div>
<div class="td" style="left:660.3px;top:0px;width:220px;height:48px;">
<span class="t" style="left:9.09px;top:15.000px;font-size:17.4px;color:#3d3d3f;-webkit-text-stroke:0.64px #3d3d3f;letter-spacing:0.625px;transform:scaleX(1.1020);">2012</span>
</div>
<div class="td" style="left:880.3px;top:0px;width:220px;height:48px;">
<span class="t" style="left:8.50px;top:15.000px;font-size:17.4px;color:#4f4f52;-webkit-text-stroke:0.64px #4f4f52;letter-spacing:0.500px;transform:scaleX(1.0800);">Kandla</span>
</div>
<div class="td" style="left:1100.3px;top:0px;width:220px;height:48px;">
<span class="t" style="left:9.30px;top:15.000px;font-size:17.4px;color:#3d3d3f;-webkit-text-stroke:0.64px #3d3d3f;letter-spacing:0.769px;transform:scaleX(1.1548);">30/07</span>
</div>
<div class="td" style="left:1320.3px;top:0px;width:220px;height:48px;">
</div>
</div>
<div class="tr" style="left:0px;top:480px;width:1348px;height:48px;">
<div class="td num" style="left:0px;top:0px;width:80.3px;height:48px;">
<span class="t" style="left:23.90px;top:16.000px;font-size:15.4px;color:#a3a3b8;letter-spacing:-0.630px;transform:scaleX(0.9400);">11</span>
</div>
<div class="td" style="left:80.3px;top:0px;width:140px;height:48px;">
<span class="t" style="left:7.85px;top:15.000px;font-size:17.4px;color:#3d3d3f;-webkit-text-stroke:0.64px #3d3d3f;letter-spacing:0.140px;transform:scaleX(1.0404);">1:...</span>
<svg class="i" style="left:52.31px;top:16.31px" width="16.28" height="16.28" viewBox="0 0 24 24" fill="none" stroke="#b1b1c6" stroke-width="1.92" stroke-linecap="round" stroke-linejoin="round"><path d="M17 21v-2a4 4 0 0 0-4-4H5a4 4 0 0 0-4 4v2"/><circle cx="9" cy="7" r="4"/><path d="M23 21v-2a4 4 0 0 0-3-3.87"/><path d="M16 3.13a4 4 0 0 1 0 7.75"/></svg>
<span class="t" style="left:72.56px;top:16.000px;font-size:16.8px;color:#7777a0;">2</span>
<svg class="i" style="left:89.48px;top:15.03px" width="19.13" height="19.13" viewBox="0 0 24 24" fill="none" stroke="#b3b3c8" stroke-width="1.57" stroke-linecap="round" stroke-linejoin="round"><path d="M4 4h16c1.1 0 2 .9 2 2v12c0 1.1-.9 2-2 2H4c-1.1 0-2-.9-2-2V6c0-1.1.9-2 2-2z"/><polyline points="22,6 12,13 2,6"/></svg>
<span class="t" style="left:112.22px;top:16.000px;font-size:16.8px;color:#7777a0;letter-spacing:0.195px;transform:scaleX(1.0218);">79</span>
</div>
<div class="td" style="left:220.3px;top:0px;width:220px;height:48px;">
<span class="t" style="left:9.12px;top:15.000px;font-size:17.4px;color:#3d3d3f;-webkit-text-stroke:0.64px #3d3d3f;letter-spacing:0.188px;transform:scaleX(1.0274);">SORSI</span>
<svg class="i" style="left:70.82px;top:13.17px" width="21.16" height="21.16" viewBox="0 0 24 24" fill="none" stroke="#8db8de" stroke-width="1.59" stroke-linecap="round" stroke-linejoin="round"><polyline points="22 12 18 12 15 21 9 3 6 12 2 12"/></svg>
</div>
<div class="td" style="left:440.3px;top:0px;width:220px;height:48px;">
<span class="t" style="left:8.95px;top:15.000px;font-size:17.4px;color:#3d3d3f;-webkit-text-stroke:0.64px #3d3d3f;letter-spacing:0.751px;transform:scaleX(1.1542);">64,043</span>
</div>
<div class="td" style="left:660.3px;top:0px;width:220px;height:48px;">
<span class="t" style="left:9.08px;top:15.000px;font-size:17.4px;color:#3d3d3f;-webkit-text-stroke:0.64px #3d3d3f;letter-spacing:0.719px;transform:scaleX(1.1193);">2017</span>
</div>
<div class="td" style="left:880.3px;top:0px;width:220px;height:48px;">
<span class="t" style="left:8.47px;top:15.000px;font-size:17.4px;color:#4f4f52;-webkit-text-stroke:0.64px #4f4f52;letter-spacing:0.538px;transform:scaleX(1.1100);">Mangalore</span>
<svg class="i" style="left:111.10px;top:16.30px" width="16.6" height="16.6" viewBox="0 0 24 24" fill="none" stroke="#93939d" stroke-width="1.75" stroke-linecap="round" stroke-linejoin="round"><circle cx="12" cy="5" r="3"/><line x1="12" y1="22" x2="12" y2="8"/><path d="M5 12H2a10 10 0 0 0 20 0h-3"/></svg>
</div>
<div class="td" style="left:1100.3px;top:0px;width:220px;height:48px;">
<span class="t" style="left:9.30px;top:15.000px;font-size:17.4px;color:#3d3d3f;-webkit-text-stroke:0.64px #3d3d3f;letter-spacing:0.769px;transform:scaleX(1.1548);">30/07</span>
</div>
<div class="td" style="left:1320.3px;top:0px;width:220px;height:48px;">
</div>
</div>
<div class="tr even" style="left:0px;top:528px;width:1348px;height:48px;">
<div class="td num" style="left:0px;top:0px;width:80.3px;height:48px;">
<span class="t" style="left:23.10px;top:16.000px;font-size:15.4px;color:#a3a3b8;letter-spacing:0.177px;transform:scaleX(1.0222);">12</span>
</div>
<div class="td" style="left:80.3px;top:0px;width:140px;height:48px;">
<span class="t" style="left:7.79px;top:15.000px;font-size:17.4px;color:#3d3d3f;-webkit-text-stroke:0.64px #3d3d3f;letter-spacing:0.378px;transform:scaleX(1.1068);">1:46 ...</span>
<svg class="i" style="left:89.10px;top:15.15px" width="18.89" height="18.89" viewBox="0 0 24 24" fill="none" stroke="#b3b3c8" stroke-width="1.59" stroke-linecap="round" stroke-linejoin="round"><path d="M4 4h16c1.1 0 2 .9 2 2v12c0 1.1-.9 2-2 2H4c-1.1 0-2-.9-2-2V6c0-1.1.9-2 2-2z"/><polyline points="22,6 12,13 2,6"/></svg>
<span class="t" style="left:112.23px;top:16.000px;font-size:16.8px;color:#7777a0;letter-spacing:0.201px;transform:scaleX(1.0224);">61</span>
</div>
<div class="td" style="left:220.3px;top:0px;width:220px;height:48px;">
<span class="t" style="left:8.51px;top:15.000px;font-size:17.4px;color:#3d3d3f;-webkit-text-stroke:0.64px #3d3d3f;letter-spacing:-0.071px;transform:scaleX(0.9886);">BULK ARCADIA</span>
<svg class="i" style="left:140.94px;top:12.99px" width="21.52" height="21.52" viewBox="0 0 24 24" fill="none" stroke="#8db8de" stroke-width="1.56" stroke-linecap="round" stroke-linejoin="round"><polyline points="22 12 18 12 15 21 9 3 6 12 2 12"/></svg>
</div>
<div class="td" style="left:440.3px;top:0px;width:220px;height:48px;">
<span class="t" style="left:8.95px;top:15.000px;font-size:17.4px;color:#3d3d3f;-webkit-text-stroke:0.64px #3d3d3f;letter-spacing:0.723px;transform:scaleX(1.1475);">62,435</span>
</div>
<div class="td" style="left:660.3px;top:0px;width:220px;height:48px;">
<span class="t" style="left:9.09px;top:15.000px;font-size:17.4px;color:#3d3d3f;-webkit-text-stroke:0.64px #3d3d3f;letter-spacing:0.625px;transform:scaleX(1.1020);">2012</span>
</div>
<div class="td" style="left:880.3px;top:0px;width:220px;height:48px;">
<span class="t" style="left:8.50px;top:15.000px;font-size:17.4px;color:#4f4f52;-webkit-text-stroke:0.64px #4f4f52;letter-spacing:0.500px;transform:scaleX(1.0800);">Port Kelang</span>
</div>
<div class="td" style="left:1100.3px;top:0px;width:220px;height:48px;">
<span class="t" style="left:9.30px;top:15.000px;font-size:17.4px;color:#3d3d3f;-webkit-text-stroke:0.64px #3d3d3f;letter-spacing:0.769px;transform:scaleX(1.1548);">30/07</span>
</div>
<div class="td" style="left:1320.3px;top:0px;width:220px;height:48px;">
</div>
</div>
</div>
<div class="dropdown" style="left:797.1px;top:472px;width:307.3px;height:499.6px;">
<button class="openmap" style="left:10.8px;top:12px;width:285.2px;height:37px;">
<span class="t" style="left:100.08px;top:10.000px;font-size:17.4px;color:#41415f;-webkit-text-stroke:0.64px #41415f;letter-spacing:0.216px;transform:scaleX(1.0361);">Open Map</span>
</button>
<label class="opt" style="left:0px;top:55px;width:307px;height:36px;">
<span class="cb" style="left:13.6px;top:9.2px"></span>
<span class="t" style="left:42.86px;top:10.000px;font-size:18.2px;color:#454545;letter-spacing:0.026px;transform:scaleX(1.0058);">Atlantic</span>
<span class="badge" style="left:223.9px;top:8px;width:47px;height:22px;">
<span class="t" style="left:11.25px;top:4.000px;font-size:13.38px;color:#5f656e;-webkit-text-stroke:0.5px #5f656e;letter-spacing:-0.042px;transform:scaleX(0.9778);">171</span>
</span>
<svg class="i" style="left:276.11px;top:8.96px" width="19.78" height="19.78" viewBox="0 0 24 24" fill="none" stroke="#778ab2" stroke-width="1.82" stroke-linecap="round" stroke-linejoin="round"><path d="M21 10c0 7-9 13-9 13s-9-6-9-13a9 9 0 0 1 18 0z"/><circle cx="12" cy="10" r="3"/></svg>
</label>
<label class="opt" style="left:0px;top:91px;width:307px;height:36px;">
<span class="cb" style="left:13.6px;top:9.2px"></span>
<span class="t" style="left:41.36px;top:10.000px;font-size:18.2px;color:#454545;letter-spacing:0.124px;transform:scaleX(1.0287);">North Atlantic</span>
<span class="badge" style="left:221.9px;top:8px;width:49px;height:22px;">
<span class="t" style="left:10.64px;top:4.000px;font-size:13.38px;color:#5f656e;-webkit-text-stroke:0.5px #5f656e;letter-spacing:0.193px;transform:scaleX(1.1154);">157</span>
</span>
<svg class="i" style="left:276.11px;top:8.96px" width="19.78" height="19.78" viewBox="0 0 24 24" fill="none" stroke="#778ab2" stroke-width="1.82" stroke-linecap="round" stroke-linejoin="round"><path d="M21 10c0 7-9 13-9 13s-9-6-9-13a9 9 0 0 1 18 0z"/><circle cx="12" cy="10" r="3"/></svg>
</label>
<label class="opt" style="left:0px;top:127px;width:307px;height:36px;">
<span class="cb" style="left:13.6px;top:9.2px"></span>
<span class="t" style="left:41.39px;top:10.000px;font-size:18.2px;color:#454545;letter-spacing:0.050px;transform:scaleX(1.0109);">Pacific</span>
<span class="badge" style="left:221.9px;top:8px;width:49px;height:22px;">
<span class="t" style="left:10.64px;top:4.000px;font-size:13.38px;color:#5f656e;-webkit-text-stroke:0.5px #5f656e;letter-spacing:0.193px;transform:scaleX(1.1154);">122</span>
</span>
<svg class="i" style="left:276.11px;top:8.96px" width="19.78" height="19.78" viewBox="0 0 24 24" fill="none" stroke="#778ab2" stroke-width="1.82" stroke-linecap="round" stroke-linejoin="round"><path d="M21 10c0 7-9 13-9 13s-9-6-9-13a9 9 0 0 1 18 0z"/><circle cx="12" cy="10" r="3"/></svg>
</label>
<label class="opt" style="left:0px;top:163px;width:307px;height:36px;">
<span class="cb" style="left:13.6px;top:9.2px"></span>
<span class="t" style="left:42.87px;top:10.000px;font-size:18.2px;color:#454545;letter-spacing:-0.289px;transform:scaleX(0.9565);">Asia</span>
<span class="badge" style="left:225.9px;top:8px;width:45px;height:22px;">
<span class="t" style="left:11.78px;top:4.000px;font-size:13.38px;color:#5f656e;-webkit-text-stroke:0.5px #5f656e;letter-spacing:-1.267px;transform:scaleX(0.9400);">111</span>
</span>
<svg class="i" style="left:276.11px;top:8.96px" width="19.78" height="19.78" viewBox="0 0 24 24" fill="none" stroke="#778ab2" stroke-width="1.82" stroke-linecap="round" stroke-linejoin="round"><path d="M21 10c0 7-9 13-9 13s-9-6-9-13a9 9 0 0 1 18 0z"/><circle cx="12" cy="10" r="3"/></svg>
</label>
<label class="opt" style="left:0px;top:199px;width:307px;height:36px;">
<span class="cb" style="left:13.6px;top:9.2px"></span>
<span class="t" style="left:41.41px;top:10.000px;font-size:18.2px;color:#454545;letter-spacing:-0.027px;transform:scaleX(0.9955);">Europe</span>
<span class="badge" style="left:228.8px;top:8px;width:42.1px;height:22px;">
<span class="t" style="left:11.37px;top:4.000px;font-size:13.38px;color:#5f656e;-webkit-text-stroke:0.5px #5f656e;letter-spacing:0.316px;transform:scaleX(1.1459);">92</span>
</span>
<svg class="i" style="left:276.11px;top:8.96px" width="19.78" height="19.78" viewBox="0 0 24 24" fill="none" stroke="#778ab2" stroke-width="1.82" stroke-linecap="round" stroke-linejoin="round"><path d="M21 10c0 7-9 13-9 13s-9-6-9-13a9 9 0 0 1 18 0z"/><circle cx="12" cy="10" r="3"/></svg>
</label>
<label class="opt" style="left:0px;top:235px;width:307px;height:36px;">
<span class="cb" style="left:13.6px;top:9.2px"></span>
<span class="t" style="left:41.41px;top:10.000px;font-size:18.2px;color:#454545;letter-spacing:0.007px;">PG-Japan range</span>
<span class="badge" style="left:228.8px;top:8px;width:42.1px;height:22px;">
<span class="t" style="left:11.22px;top:4.000px;font-size:13.38px;color:#5f656e;-webkit-text-stroke:0.5px #5f656e;letter-spacing:0.340px;transform:scaleX(1.1561);">80</span>
</span>
<svg class="i" style="left:276.11px;top:8.96px" width="19.78" height="19.78" viewBox="0 0 24 24" fill="none" stroke="#778ab2" stroke-width="1.82" stroke-linecap="round" stroke-linejoin="round"><path d="M21 10c0 7-9 13-9 13s-9-6-9-13a9 9 0 0 1 18 0z"/><circle cx="12" cy="10" r="3"/></svg>
</label>
<label class="opt" style="left:0px;top:271px;width:307px;height:36px;">
<span class="cb" style="left:13.6px;top:9.2px"></span>
<span class="t" style="left:41.22px;top:10.000px;font-size:18.2px;color:#454545;">Indian Ocean</span>
<span class="badge" style="left:228.8px;top:8px;width:42.1px;height:22px;">
<span class="t" style="left:11.30px;top:4.000px;font-size:13.38px;color:#5f656e;-webkit-text-stroke:0.5px #5f656e;letter-spacing:0.319px;transform:scaleX(1.1473);">79</span>
</span>
<svg class="i" style="left:276.11px;top:8.96px" width="19.78" height="19.78" viewBox="0 0 24 24" fill="none" stroke="#778ab2" stroke-width="1.82" stroke-linecap="round" stroke-linejoin="round"><path d="M21 10c0 7-9 13-9 13s-9-6-9-13a9 9 0 0 1 18 0z"/><circle cx="12" cy="10" r="3"/></svg>
</label>
<label class="opt" style="left:0px;top:307px;width:307px;height:36px;">
<span class="cb" style="left:13.6px;top:9.2px"></span>
<span class="t" style="left:41.38px;top:10.000px;font-size:18.2px;color:#454545;letter-spacing:0.073px;transform:scaleX(1.0156);">North Pacific Ocean</span>
<span class="badge" style="left:228.8px;top:8px;width:42.1px;height:22px;">
<span class="t" style="left:11.30px;top:4.000px;font-size:13.38px;color:#5f656e;-webkit-text-stroke:0.5px #5f656e;letter-spacing:0.315px;transform:scaleX(1.1423);">74</span>
</span>
<svg class="i" style="left:276.11px;top:8.96px" width="19.78" height="19.78" viewBox="0 0 24 24" fill="none" stroke="#778ab2" stroke-width="1.82" stroke-linecap="round" stroke-linejoin="round"><path d="M21 10c0 7-9 13-9 13s-9-6-9-13a9 9 0 0 1 18 0z"/><circle cx="12" cy="10" r="3"/></svg>
</label>
<label class="opt" style="left:0px;top:343px;width:307px;height:36px;">
<span class="cb" style="left:13.6px;top:9.2px"></span>
<span class="t" style="left:41.52px;top:10.000px;font-size:18.2px;color:#454545;letter-spacing:-0.128px;transform:scaleX(0.9831);">UKC-MED</span>
<span class="badge" style="left:228.8px;top:8px;width:42.1px;height:22px;">
<span class="t" style="left:11.10px;top:4.000px;font-size:13.38px;color:#5f656e;-webkit-text-stroke:0.5px #5f656e;letter-spacing:0.333px;transform:scaleX(1.1538);">65</span>
</span>
<svg class="i" style="left:276.11px;top:8.96px" width="19.78" height="19.78" viewBox="0 0 24 24" fill="none" stroke="#778ab2" stroke-width="1.82" stroke-linecap="round" stroke-linejoin="round"><path d="M21 10c0 7-9 13-9 13s-9-6-9-13a9 9 0 0 1 18 0z"/><circle cx="12" cy="10" r="3"/></svg>
</label>
<label class="opt" style="left:0px;top:379px;width:307px;height:36px;">
<span class="cb" style="left:13.6px;top:9.2px"></span>
<span class="t" style="left:42.07px;top:10.000px;font-size:18.2px;color:#454545;letter-spacing:0.047px;transform:scaleX(1.0090);">Singapore-Japan</span>
<span class="badge" style="left:228.8px;top:8px;width:42.1px;height:22px;">
<span class="t" style="left:11.27px;top:4.000px;font-size:13.38px;color:#5f656e;-webkit-text-stroke:0.5px #5f656e;letter-spacing:0.325px;transform:scaleX(1.1487);">59</span>
</span>
<svg class="i" style="left:276.11px;top:8.96px" width="19.78" height="19.78" viewBox="0 0 24 24" fill="none" stroke="#778ab2" stroke-width="1.82" stroke-linecap="round" stroke-linejoin="round"><path d="M21 10c0 7-9 13-9 13s-9-6-9-13a9 9 0 0 1 18 0z"/><circle cx="12" cy="10" r="3"/></svg>
</label>
<a class="t cancel" style="left:30.76px;top:456.000px;font-size:18.74px;color:#6c7b8a;-webkit-text-stroke:0.69px #6c7b8a;letter-spacing:0.324px;transform:scaleX(1.0558);">Cancel</a>
<button class="apply" style="left:203.9px;top:441px;width:92.1px;height:48px;">
<span class="t" style="left:21.32px;top:15.000px;font-size:18.74px;color:#a7a7aa;-webkit-text-stroke:0.69px #a7a7aa;letter-spacing:0.253px;transform:scaleX(1.0411);">Apply</span>
</button>
</div>
<div class="redrect"></div>
<div class="strip"></div>
</div></body></html>
